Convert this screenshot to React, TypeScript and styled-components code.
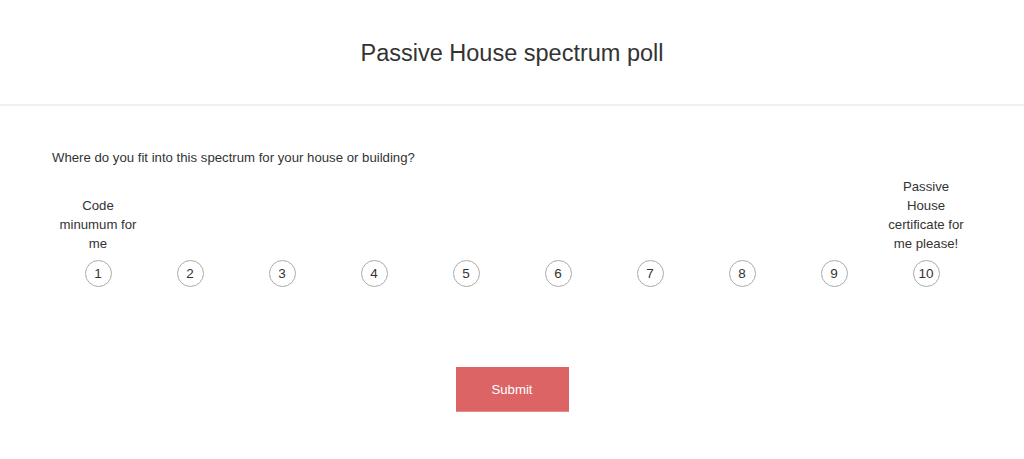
import React from 'react';
import styled, { createGlobalStyle } from 'styled-components';

const GlobalStyle = createGlobalStyle`
  body {
    margin: 0;
    background: #fff;
    font-family: "Liberation Sans", Arial, sans-serif;
    color: #333;
  }
`;

const Header = styled.header`
  height: 104px;
  border-bottom: 2px solid #f0f0f0;
  display: flex;
  align-items: center;
  justify-content: center;
`;

const Title = styled.h1`
  margin: 0;
  font-size: 23.5px;
  font-weight: 400;
  color: #333;
  padding-top: 2px;
`;

const Body = styled.main`
  padding: 43px 52px 0;
`;

const Question = styled.p`
  margin: 0;
  font-size: 13.2px;
  line-height: 18px;
  color: #333;
`;

const Scale = styled.div`
  display: grid;
  grid-template-columns: repeat(10, 1fr);
  margin-top: 10px;
`;

const Option = styled.label`
  display: flex;
  flex-direction: column;
  align-items: center;
  justify-content: flex-end;
  cursor: pointer;
`;

const Caption = styled.span`
  width: 82px;
  text-align: center;
  font-size: 13.2px;
  line-height: 19px;
  color: #333;
  margin-bottom: 7px;
`;

const Circle = styled.span`
  width: 25px;
  height: 25px;
  border: 1px solid #aaa;
  border-radius: 50%;
  display: flex;
  align-items: center;
  justify-content: center;
  font-size: 13.5px;
  color: #333;
`;

const Actions = styled.div`
  display: flex;
  justify-content: center;
  margin-top: 80px;
`;

const SubmitButton = styled.button`
  width: 113px;
  height: 45px;
  border: none;
  border-bottom: 1px solid #e88a8a;
  background: #dc6464;
  color: #fff;
  font-family: "Liberation Sans", Arial, sans-serif;
  font-size: 13.2px;
  cursor: pointer;
`;

const captions: Record<number, string> = {
  1: 'Code minumum for me',
  10: 'Passive House certificate for me please!',
};

export default function App() {
  const values = Array.from({ length: 10 }, (_, i) => i + 1);
  return (
    <>
      <GlobalStyle />
      <Header>
        <Title>Passive House spectrum poll</Title>
      </Header>
      <Body>
        <Question>Where do you fit into this spectrum for your house or building?</Question>
        <Scale>
          {values.map(v => (
            <Option key={v}>
              {captions[v] && <Caption>{captions[v]}</Caption>}
              <Circle>{v}</Circle>
            </Option>
          ))}
        </Scale>
        <Actions>
          <SubmitButton>Submit</SubmitButton>
        </Actions>
      </Body>
    </>
  );
}
